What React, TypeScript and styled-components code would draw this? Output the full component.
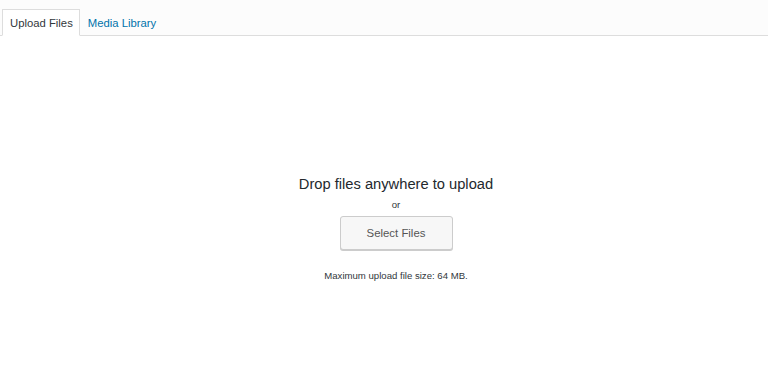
import * as React from 'react';
import styled, { createGlobalStyle } from 'styled-components';

const GlobalStyle = createGlobalStyle`
	html, body {
		margin: 0;
		padding: 0;
		background: #fff;
		font-family: 'Liberation Sans', Arial, sans-serif;
	}
`;

const Frame = styled.div`
	width: 768px;
	height: 390px;
	display: flex;
	flex-direction: column;
	background: #fff;
`;

const RouterBar = styled.div`
	height: 36px;
	box-sizing: border-box;
	display: flex;
	align-items: flex-end;
	padding-left: 2px;
	background: #fcfcfc;
	border-bottom: 1px solid #dddddd;
`;

const Tab = styled.button<{ $active?: boolean }>`
	height: 27px;
	margin-bottom: -1px;
	padding: 0 6px 0 7px;
	font-family: inherit;
	font-size: 11.3px;
	line-height: 26px;
	cursor: pointer;
	border: 1px solid ${p => (p.$active ? '#dddddd' : 'transparent')};
	border-bottom-color: ${p => (p.$active ? '#fff' : 'transparent')};
	background: ${p => (p.$active ? '#fff' : 'transparent')};
	color: ${p => (p.$active ? '#32373c' : '#0073aa')};
`;

const Uploader = styled.div`
	flex: 1;
	display: flex;
	flex-direction: column;
	align-items: center;
	padding: 138px 0 0 24px;
`;

const Instructions = styled.h2`
	margin: 0;
	font-size: 14.7px;
	font-weight: 400;
	line-height: 20px;
	color: #23282d;
`;

const Or = styled.p`
	margin: 4px 0 0;
	font-size: 9.6px;
	line-height: 14px;
	color: #32373c;
`;

const SelectButton = styled.button`
	margin-top: 4px;
	width: 113px;
	height: 34px;
	font-family: inherit;
	font-size: 11.4px;
	color: #555;
	background: #f7f7f7;
	border: 1px solid #cccccc;
	border-radius: 3px;
	box-shadow: 0 1px 0 #cccccc;
	cursor: pointer;
`;

const MaxSize = styled.p`
	margin: 19px 0 0;
	font-size: 9.6px;
	line-height: 14px;
	color: #32373c;
`;

export default function App() {
	const [tab, setTab] = React.useState('upload');

	return (
		<Frame>
			<GlobalStyle />
			<RouterBar>
				<Tab $active={tab === 'upload'} onClick={() => setTab('upload')}>
					Upload Files
				</Tab>
				<Tab $active={tab === 'library'} onClick={() => setTab('library')}>
					Media Library
				</Tab>
			</RouterBar>
			<Uploader>
				<Instructions>Drop files anywhere to upload</Instructions>
				<Or>or</Or>
				<SelectButton>Select Files</SelectButton>
				<MaxSize>Maximum upload file size: 64 MB.</MaxSize>
			</Uploader>
		</Frame>
	);
}
